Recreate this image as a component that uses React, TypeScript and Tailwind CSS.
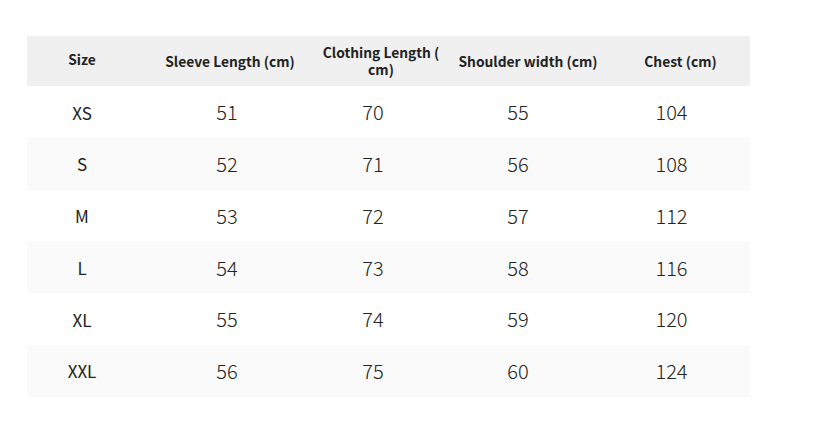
import React from "react";

const rows = [
  ["XS", "51", "70", "55", "104"],
  ["S", "52", "71", "56", "108"],
  ["M", "53", "72", "57", "112"],
  ["L", "54", "73", "58", "116"],
  ["XL", "55", "74", "59", "120"],
  ["XXL", "56", "75", "60", "124"],
];

const font = { fontFamily: '"Noto Sans CJK SC", "Noto Sans", sans-serif' };

export default function App() {
  return (
    <div className="w-[837px] h-[429px] bg-white pt-[36px] pl-[27px]" style={font}>
      <div className="w-[723px]">
        <div className="grid grid-cols-[110px_186px_116px_178px_133px] h-[50px] bg-[#f0f0f0] text-[13.8px] font-bold text-[#222] leading-[17px] whitespace-nowrap">
          <div className="flex items-center justify-center pb-[4px]">Size</div>
          <div className="flex items-center justify-center">Sleeve Length (cm)</div>
          <div className="flex flex-col items-center justify-center text-center">
            <span>Clothing Length (</span>
            <span>cm)</span>
          </div>
          <div className="flex items-center justify-center">Shoulder width (cm)</div>
          <div className="flex items-center justify-center pr-[6px]">Chest (cm)</div>
        </div>
        {rows.map((r, i) => (
          <div
            key={r[0]}
            className={`grid grid-cols-[110px_186px_116px_178px_133px] h-[51.75px] text-[20px] text-[#222] font-light ${
              i % 2 === 1 ? "bg-[#fafafa]" : "bg-white"
            }`}
          >
            <div className="flex items-center justify-center text-[17px] font-normal pt-[1px]">{r[0]}</div>
            <div className="flex items-center justify-center pr-[6px] pt-[1px]">{r[1]}</div>
            <div className="flex items-center justify-center pr-[16px] pt-[1px]">{r[2]}</div>
            <div className="flex items-center justify-center pr-[20px] pt-[1px]">{r[3]}</div>
            <div className="flex items-center justify-center pr-[24px] pt-[1px]">{r[4]}</div>
          </div>
        ))}
      </div>
    </div>
  );
}
